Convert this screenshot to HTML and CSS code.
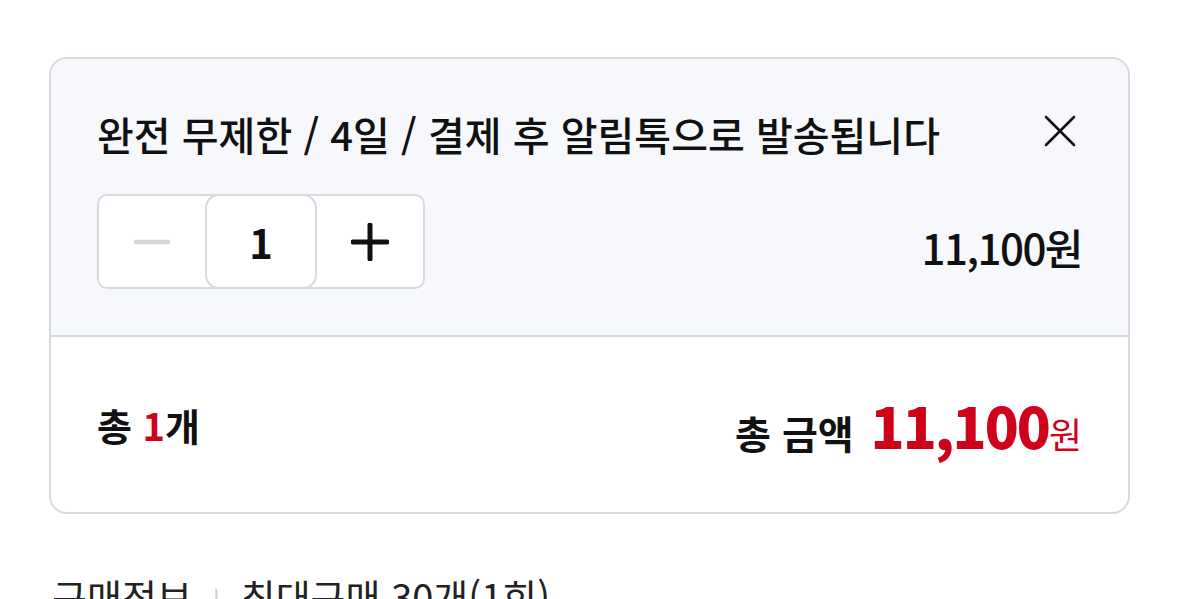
FILE: index.html
```
<!DOCTYPE html>
<html lang="ko">
    <head>
        <meta charset="utf-8">
        <title>옵션 선택</title>
        <link rel="stylesheet" href="styles.css">
    </head>
    <body>

        <div class="order-box">
            <!-- selected option with quantity -->
            <div class="option">
                <div class="option-head">
                    <p class="option-name">완전 무제한 / 4일 / 결제 후 알림톡으로 발송됩니다</p>
                    <button class="remove" type="button" aria-label="삭제">
                        <svg width="34" height="34" viewBox="0 0 34 34">
                            <path d="M3 3 L31 31 M31 3 L3 31" stroke="#111" stroke-width="2.6" stroke-linecap="round" fill="none"/>
                        </svg>
                    </button>
                </div>
                <div class="option-row">
                    <div class="stepper">
                        <button class="step minus" type="button" aria-label="빼기">
                            <svg width="36" height="36" viewBox="0 0 36 36">
                                <path d="M2 18 H34" stroke="#d3d7dc" stroke-width="4.5" stroke-linecap="round"/>
                            </svg>
                        </button>
                        <span class="count">1</span>
                        <button class="step plus" type="button" aria-label="더하기">
                            <svg width="38" height="38" viewBox="0 0 38 38">
                                <path d="M2 19 H36 M19 2 V36" stroke="#111" stroke-width="5" stroke-linecap="round"/>
                            </svg>
                        </button>
                    </div>
                    <span class="option-price">11,100원</span>
                </div>
            </div>

            <!-- totals -->
            <div class="total">
                <span class="total-count">총 <em>1</em>개</span>
                <span class="total-sum">총 금액 <strong>11,100</strong><em>원</em></span>
            </div>
        </div>

        <p class="buy-info">구매정보 <span class="bar">|</span> 최대구매 30개(1회)</p>

    </body>
</html>
```

FILE: styles.css
```
body {
margin: 0;
padding: 57px 49px 0;
background: white;
color: #111;
font-family: "Noto Sans CJK KR", "Noto Sans", sans-serif;
}

button {
border: none;
background: none;
padding: 0;
cursor: pointer;
}

.order-box {
border: 2px solid #d6dae0;
border-radius: 18px;
overflow: hidden;
}

.option {
background-color: #f7f8fc;
padding: 48px 46px 46px 46px;
border-bottom: 2px solid #d6dae0;
}

.option-head {
display: flex;
justify-content: space-between;
align-items: center;
height: 54px;
}

.option-name {
margin: 0;
font-size: 40px;
font-weight: 500;
}

.remove {
display: flex;
margin: 0 5px 6px 0;
}

.option-row {
display: flex;
justify-content: space-between;
align-items: center;
margin-top: 33px;
}

.stepper {
display: flex;
width: 324px;
height: 91px;
border: 2px solid #d6dae0;
border-radius: 10px;
background: white;
}

.step {
width: 106px;
display: flex;
align-items: center;
justify-content: center;
}

.count {
width: 108px;
margin: -2px 0;
border: 2px solid #d6dae0;
border-radius: 14px;
display: flex;
align-items: center;
justify-content: center;
font-size: 40px;
font-weight: bold;
}

.option-price {
font-size: 42px;
font-weight: 500;
letter-spacing: -1.5px;
margin-top: 10px;
}

.total {
height: 175px;
padding: 0 46px;
display: flex;
justify-content: space-between;
align-items: center;
}

.total em {
font-style: normal;
color: #d0021b;
}

.total-count {
font-size: 38px;
font-weight: bold;
}

.total-sum {
font-size: 39px;
font-weight: bold;
}

.total-sum strong {
font-size: 56px;
color: #d0021b;
letter-spacing: -2px;
margin-left: 6px;
}

.total-sum em {
font-weight: normal;
font-size: 36px;
}

.buy-info {
margin: 54px 0 0 3px;
font-size: 38px;
color: #222;
}

.bar {
color: #c8ccd2;
font-size: 28px;
margin: 0 10px;
}
```
